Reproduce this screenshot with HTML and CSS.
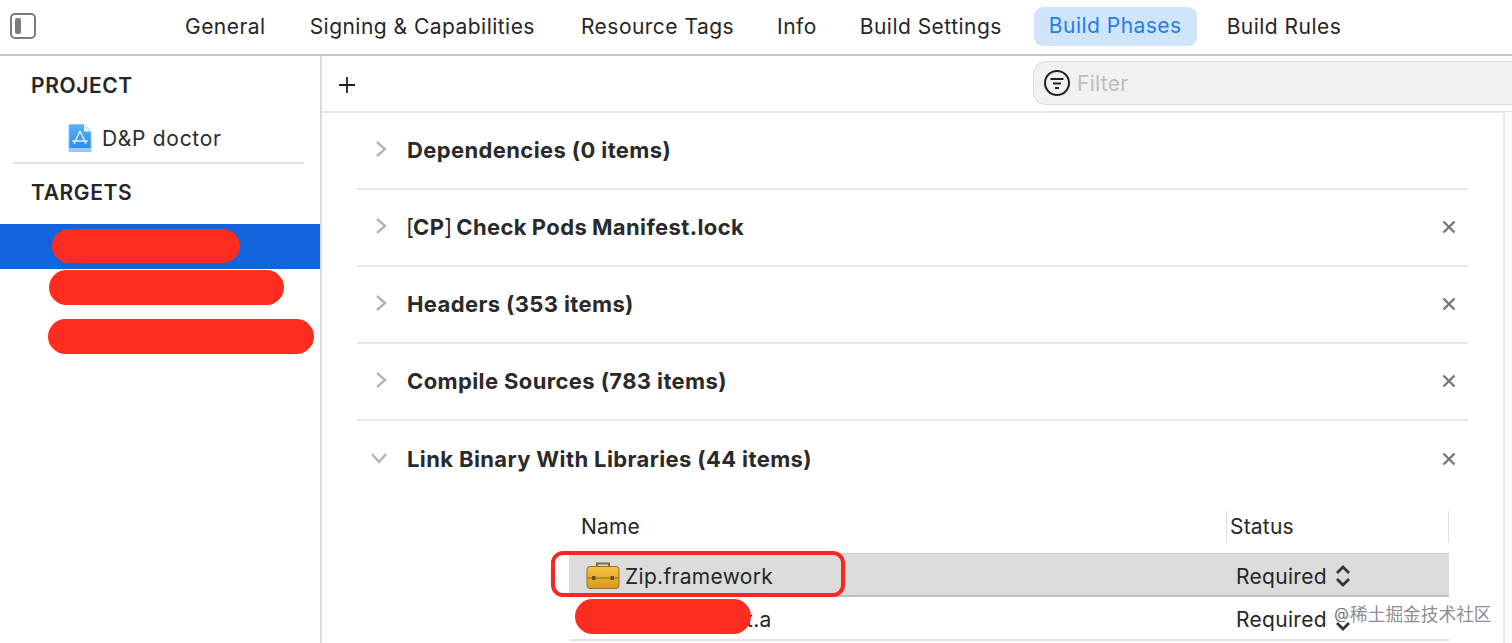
FILE: index.html
```html
<!DOCTYPE html>
<html lang="en">
<head>
<meta charset="utf-8">
<title>Build Phases</title>
<link rel="stylesheet" href="styles.css">
</head>
<body>
<header class="topbar">
  <div class="toggle"><span class="toggle-fill"></span></div>
  <nav class="tabs">
    <span class="tab t1">General</span>
    <span class="tab t2">Signing &amp; Capabilities</span>
    <span class="tab t3">Resource Tags</span>
    <span class="tab t4">Info</span>
    <span class="tab t5">Build Settings</span>
    <span class="tab active">Build Phases</span>
    <span class="tab t7">Build Rules</span>
  </nav>
</header>
<div class="body">
  <aside class="sidebar">
    <div class="side-head project">PROJECT</div>
    <div class="project-row">
      <svg class="app-icon" width="24" height="30" viewBox="0 0 24 30">
        <defs><linearGradient id="appg" x1="0" y1="0" x2="0" y2="1"><stop offset="0" stop-color="#5cb2f6"/><stop offset="1" stop-color="#2486f0"/></linearGradient></defs>
        <path d="M1 1.500h15l7 7v20H1z" fill="url(#appg)" stroke="#8cc4f5"/>
        <path d="M16 1.500v7h7z" fill="#e4f1fd"/>
        <path d="M1 25h22v3.500H1z" fill="#9ccbf7"/>
        <path d="M12 8 6 21M12 8l6 13M4 18h16M9 14l-1 2M15 14l1 2" fill="none" stroke="#e8f4ff" stroke-width="1.300"/>
      </svg>
      <span>D&amp;P doctor</span>
    </div>
    <div class="side-rule"></div>
    <div class="side-head targets">TARGETS</div>
    <div class="target selected"><span class="blob b1"></span></div>
    <div class="target plain"><span class="blob b2"></span></div>
    <div class="target plain third"><span class="blob b3"></span></div>
  </aside>
  <main class="main">
    <div class="filterbar">
      <svg class="plus" width="18" height="18" viewBox="0 0 18 18"><path d="M9 1v16M1 9h16" stroke="#222" stroke-width="1.800" fill="none"/></svg>
      <div class="filter">
        <svg width="28" height="28" viewBox="0 0 28 28"><circle cx="14" cy="14" r="12" fill="none" stroke="#222" stroke-width="2"/><path d="M7.500 10h13M10 14.500h8M12 19h4" stroke="#222" stroke-width="2" fill="none"/></svg>
        <span>Filter</span>
      </div>
    </div>
    <div class="content">
      <div class="phases">
        <section class="phase">
          <svg class="chev" width="12" height="18" viewBox="0 0 12 18"><path d="M2 2l8 7-8 7" fill="none" stroke="#b5b5b5" stroke-width="2.400"/></svg>
          <h2>Dependencies (0 items)</h2>
        </section>
        <section class="phase">
          <svg class="chev" width="12" height="18" viewBox="0 0 12 18"><path d="M2 2l8 7-8 7" fill="none" stroke="#b5b5b5" stroke-width="2.400"/></svg>
          <h2 class="cp-title"><span class="cp">[</span>CP<span class="cp">]</span> Check Pods Manifest.lock</h2>
          <svg class="close" width="14" height="14" viewBox="0 0 14 14"><path d="M1.500 1.500l11 11M12.500 1.500l-11 11" stroke="#777" stroke-width="2.400" fill="none"/></svg>
        </section>
        <section class="phase">
          <svg class="chev" width="12" height="18" viewBox="0 0 12 18"><path d="M2 2l8 7-8 7" fill="none" stroke="#b5b5b5" stroke-width="2.400"/></svg>
          <h2>Headers (353 items)</h2>
          <svg class="close" width="14" height="14" viewBox="0 0 14 14"><path d="M1.500 1.500l11 11M12.500 1.500l-11 11" stroke="#777" stroke-width="2.400" fill="none"/></svg>
        </section>
        <section class="phase">
          <svg class="chev" width="12" height="18" viewBox="0 0 12 18"><path d="M2 2l8 7-8 7" fill="none" stroke="#b5b5b5" stroke-width="2.400"/></svg>
          <h2>Compile Sources (783 items)</h2>
          <svg class="close" width="14" height="14" viewBox="0 0 14 14"><path d="M1.500 1.500l11 11M12.500 1.500l-11 11" stroke="#777" stroke-width="2.400" fill="none"/></svg>
        </section>
        <section class="phase open">
          <svg class="chev-down" width="18" height="12" viewBox="0 0 18 12"><path d="M2 2l7 8 7-8" fill="none" stroke="#b5b5b5" stroke-width="2.400"/></svg>
          <h2>Link Binary With Libraries (44 items)</h2>
          <svg class="close" width="14" height="14" viewBox="0 0 14 14"><path d="M1.500 1.500l11 11M12.500 1.500l-11 11" stroke="#777" stroke-width="2.400" fill="none"/></svg>
        </section>
        <div class="libs">
          <div class="libs-head">
            <span class="col-name">Name</span>
            <span class="col-status">Status</span>
          </div>
          <div class="lib zip">
            <div class="lib-name">
              <svg class="case" width="34" height="28" viewBox="0 0 34 28">
                <defs><linearGradient id="caseg" x1="0" y1="0" x2="0" y2="1"><stop offset="0" stop-color="#f6c544"/><stop offset="1" stop-color="#d99a1e"/></linearGradient></defs>
                <path d="M11 6V2.500h12V6" fill="none" stroke="#8a6a2c" stroke-width="2"/>
                <rect x="1" y="5.500" width="32" height="22" rx="3" fill="url(#caseg)" stroke="#96702a"/>
                <path d="M1 17h32" stroke="#a27a28" stroke-width="1.400"/>
                <rect x="6" y="15" width="3.500" height="4" fill="#6d5220"/><rect x="24.500" y="15" width="3.500" height="4" fill="#6d5220"/>
              </svg>
              <span>Zip.framework</span>
            </div>
            <div class="lib-status"><span>Required</span>
              <svg width="18" height="24" viewBox="0 0 18 24"><path d="M3 9l6-6 6 6M3 15l6 6 6-6" fill="none" stroke="#333" stroke-width="2.800"/></svg>
            </div>
          </div>
          <div class="lib second">
            <div class="lib-name"><span class="a-suffix">t.a</span></div>
            <div class="lib-status"><span>Required</span>
              <svg width="18" height="24" viewBox="0 0 18 24"><path d="M3 9l6-6 6 6M3 15l6 6 6-6" fill="none" stroke="#333" stroke-width="2.800"/></svg>
            </div>
          </div>
        </div>
      </div>
      <div class="scrolltrack"></div>
    </div>
  </main>
</div>
<div class="mark-box"></div>
<div class="mark-blob"></div>
<div class="watermark"><span class="wm-at">@</span>稀土掘金技术社区</div>
</body>
</html>
```
FILE: styles.css
```css
* { box-sizing: border-box; }
html, body { margin: 0; height: 643px; overflow: hidden; background: #fff; }
body { font-family: Inter, "Liberation Sans", sans-serif; color: #262626; font-size: 21px; position: relative; }

.topbar { height: 56px; border-bottom: 2px solid #c9c9c9; display: flex; align-items: center; padding: 0 0 2px 10px; }
.toggle { width: 26px; height: 26px; border: 2px solid #7c7c7c; border-radius: 5px; padding: 3px; display: flex; }
.toggle-fill { width: 6px; background: #7c7c7c; border-radius: 2px; }
.tabs { display: flex; align-items: center; margin: 1px 0 0 149px; }
.tab { white-space: nowrap; line-height: 38px; letter-spacing: 0.47px; }
.t1 { margin-right: 44px; }
.t2 { margin-right: 46px; }
.t3 { margin-right: 43px; }
.t4 { margin-right: 43px; }
.t5 { margin-right: 32px; }
.active { color: #1f7ee8; background: #d0e4fb; border-radius: 9px; padding: 0 15px; margin-right: 30px; height: 39px; }

.body { display: flex; height: 587px; }
.sidebar { width: 322px; flex: none; border-right: 2px solid #dcdcdc; }
.side-head { font-weight: 600; padding-left: 31px; line-height: 26px; letter-spacing: 0.6px; }
.project { margin-top: 17px; }
.project-row { display: flex; align-items: center; gap: 10px; padding-left: 68px; height: 30px; margin-top: 24px; color: #2c2c2c; letter-spacing: 0.7px; }
.side-rule { height: 2px; background: #e2e2e2; margin: 9px 16px 0 13px; }
.targets { margin-top: 16px; }
.target { display: flex; align-items: flex-start; }
.selected { height: 45px; margin-top: 18px; background: #1264dc; }
.plain { height: 35px; }
.third { margin-top: 15px; }
.blob { display: block; height: 35px; background: #ff2d1f; border-radius: 18px; }
.b1 { width: 188px; margin: 5px 0 0 52px; height: 34px; }
.b2 { width: 235px; margin: 1px 0 0 49px; }
.b3 { width: 266px; margin-left: 48px; }

.main { flex: 1; min-width: 0; display: flex; flex-direction: column; }
.filterbar { height: 57px; border-bottom: 2px solid #e6e6e6; display: flex; align-items: center; padding: 0 0 0 16px; }
.plus { flex: none; margin-top: 3px; }
.filter { margin-left: 677px; flex: 1; height: 44px; margin-top: -1px; background: #f1f1f1; border: 1px solid #dcdcdc; border-right: 0; border-radius: 13px 0 0 13px; display: flex; align-items: center; padding-left: 9px; gap: 6px; color: #bdbdbd; letter-spacing: 0.3px; }

.content { flex: 1; display: flex; min-height: 0; }
.phases { width: 1111px; margin-left: 35px; }
.phase { height: 77px; border-bottom: 2px solid #e6e6e6; display: flex; align-items: center; position: relative; padding: 0 0 2px 50px; }
.phase h2 { margin: 0; font-size: 22px; font-weight: 700; line-height: 26px; color: #2a2a2a; letter-spacing: 0.38px; }
.phase .cp-title { margin-left: -1px; word-spacing: -0.7px; }
.cp { font-weight: 400; letter-spacing: -1px; }
.chev { position: absolute; left: 18px; top: 27px; }
.chev-down { position: absolute; left: 13px; top: 31px; }
.close { margin-left: auto; margin-right: 12px; }
.open { border-bottom: 0; }
.libs { padding-left: 212px; margin-top: -1px; }
.libs-head { height: 56px; display: flex; align-items: center; padding-top: 3px; width: 880px; letter-spacing: 0.2px; }
.col-name { width: 657px; padding-left: 12px; }
.col-status { flex: 1; border-left: 1px solid #dedede; border-right: 1px solid #dedede; padding-left: 3px; line-height: 32px; }
.lib { width: 880px; height: 44px; display: flex; align-items: center; border-bottom: 2px solid #e4e4e4; padding-top: 3px; letter-spacing: 0.3px; }
.zip { background: #dcdcdc; border-top: 1px solid #cfcfcf; border-bottom-color: #bdbdbd; }
.lib-name { width: 667px; display: flex; align-items: center; padding-left: 17px; gap: 5px; }
.case { margin-top: -2px; }
.a-suffix { margin-left: 160px; }
.lib-status { display: flex; align-items: center; gap: 7px; }
.scrolltrack { width: 9px; flex: none; border-left: 2px solid #ececec; background: #fafafa; position: absolute; left: 1503px; top: 112px; bottom: 0; }

.mark-box { position: absolute; left: 551px; top: 551px; width: 294px; height: 46px; border: 4px solid #f5291f; border-radius: 12px; }
.mark-blob { position: absolute; left: 575px; top: 599px; width: 176px; height: 35px; background: #ff2d1f; border-radius: 18px; }
.watermark { position: absolute; left: 1333px; top: 602px; font-family: "Noto Sans CJK SC", sans-serif; font-size: 17.700px; line-height: 22px; color: #8e8e8e; white-space: nowrap; display: flex; align-items: center; }
.wm-at { font-family: Inter, sans-serif; font-size: 15px; line-height: 17px; width: 17px; height: 17px; text-align: center; color: #666; background: #fff; border-radius: 50%; }
```
